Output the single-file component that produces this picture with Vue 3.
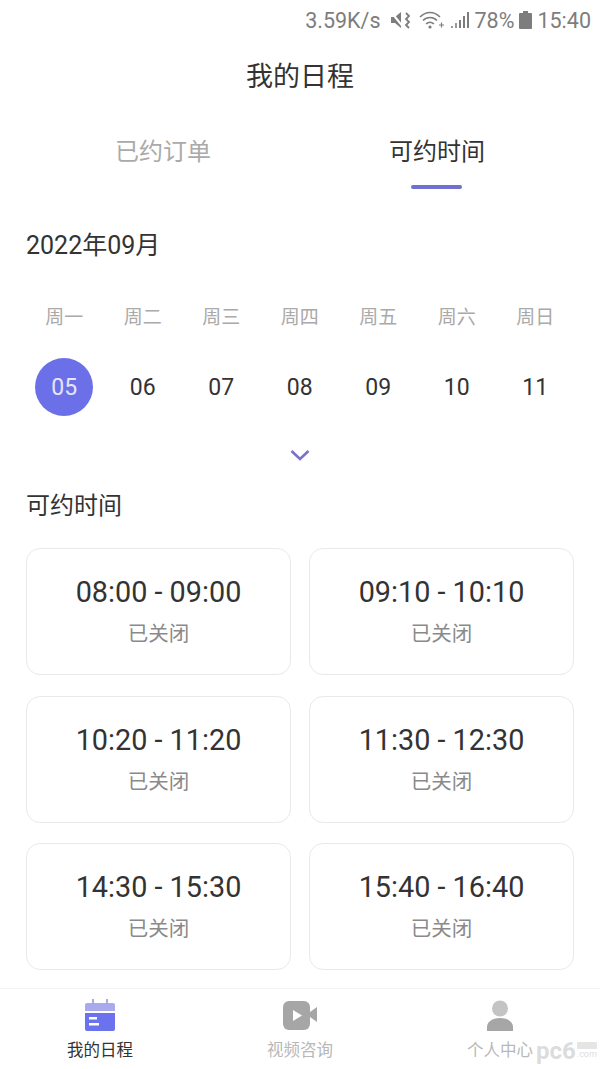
<script setup>
const weekdays = ['周一', '周二', '周三', '周四', '周五', '周六', '周日']
const days = ['05', '06', '07', '08', '09', '10', '11']
const slots = [
  '08:00 - 09:00',
  '09:10 - 10:10',
  '10:20 - 11:20',
  '11:30 - 12:30',
  '14:30 - 15:30',
  '15:40 - 16:40'
]
</script>

<template>
  <div class="page">
    <div class="status-bar">
      <span class="st-speed">3.59K/s</span>
      <svg class="st-mute" viewBox="0 0 24 20" width="24" height="20">
        <path d="M1 7h4l6-5v16l-6-5H1z" fill="#7d7d7d" />
        <path d="M1 2l13 16" stroke="#fff" stroke-width="2" />
        <path d="M16 3l3 3-3 3 3 3-3 3 3 3" fill="none" stroke="#7d7d7d" stroke-width="1.8" />
      </svg>
      <svg class="st-wifi" viewBox="0 0 26 20" width="26" height="20">
        <path d="M1 7c6-6 14-6 20 0M4 10.5c4-4 10-4 14 0M7 14c2.5-2.2 5.5-2.2 8 0" fill="none" stroke="#7d7d7d" stroke-width="1.6" />
        <circle cx="11" cy="17" r="1.6" fill="#7d7d7d" />
        <path d="M20 15h5M22.5 12.5v5" stroke="#7d7d7d" stroke-width="1.2" />
      </svg>
      <svg class="st-signal" viewBox="0 0 20 18" width="20" height="18">
        <rect x="1" y="15" width="2" height="2" fill="#9a9a9a" />
        <rect x="5" y="12" width="2" height="5" fill="#9a9a9a" />
        <rect x="9" y="9" width="2" height="8" fill="#7d7d7d" />
        <rect x="13" y="5" width="2" height="12" fill="#7d7d7d" />
        <rect x="17" y="1" width="2" height="16" fill="#7d7d7d" />
      </svg>
      <span class="st-level">78%</span>
      <svg class="st-batt" viewBox="0 0 13 20" width="13" height="20">
        <path d="M4 1h5v2h3a1 1 0 0 1 1 1v14a1 1 0 0 1-1 1H1a1 1 0 0 1-1-1V4a1 1 0 0 1 1-1h3z" fill="#7d7d7d" />
      </svg>
      <span>15:40</span>
    </div>

    <h1 class="title">我的日程</h1>

    <div class="tabs">
      <div class="tab">已约订单</div>
      <div class="tab active">可约时间</div>
    </div>

    <div class="month">2022年09月</div>

    <div class="week-row">
      <span v-for="w in weekdays" :key="w" class="week">{{ w }}</span>
    </div>
    <div class="day-row">
      <div class="day-cell" v-for="(d, i) in days" :key="d">
        <span class="day" :class="{ selected: i === 0 }">{{ d }}</span>
      </div>
    </div>

    <div class="expand">
      <svg width="22" height="14" viewBox="0 0 22 14">
        <path d="M2.5 3l8.5 8 8.5-8" fill="none" stroke="#7773c9" stroke-width="2.6" />
      </svg>
    </div>

    <div class="section">可约时间</div>

    <div class="slots">
      <div class="slot" v-for="s in slots" :key="s">
        <div class="slot-time">{{ s }}</div>
        <div class="slot-state">已关闭</div>
      </div>
    </div>

    <nav class="tabbar">
      <div class="nav-item on">
        <svg width="32" height="32" viewBox="0 0 32 32">
          <path d="M1 6a2 2 0 0 1 2-2h26a2 2 0 0 1 2 2v6H1z" fill="#a9a9ee" />
          <rect x="8" y="0" width="2" height="6" fill="#a9a9ee" />
          <rect x="22" y="0" width="2" height="6" fill="#a9a9ee" />
          <path d="M1 14h30v16a2 2 0 0 1-2 2H3a2 2 0 0 1-2-2z" fill="#6b72ee" />
          <rect x="5" y="18" width="8" height="2.5" fill="#fff" />
          <rect x="5" y="24" width="10" height="2.5" fill="#fff" />
        </svg>
        <span>我的日程</span>
      </div>
      <div class="nav-item">
        <svg width="36" height="32" viewBox="0 0 36 32">
          <rect x="1" y="2" width="27" height="29" rx="6" fill="#a6a6a6" />
          <path d="M28 13l7-5v15l-7-5z" fill="#a6a6a6" />
          <path d="M11 11l9 5.5-9 5.5z" fill="#fff" />
        </svg>
        <span>视频咨询</span>
      </div>
      <div class="nav-item">
        <svg width="32" height="32" viewBox="0 0 32 32">
          <circle cx="16" cy="9.5" r="8" fill="#c4c4c4" />
          <path d="M3 32v-4c0-5 5-9 13-9s13 4 13 9v4z" fill="#a6a6a6" />
        </svg>
        <span>个人中心</span>
      </div>
    </nav>

    <div class="watermark">
      <span class="wm-name">pc6</span>
      <span class="wm-side">
        <i class="wm-box"></i>
        <span class="wm-com">.com</span>
      </span>
    </div>
  </div>
</template>

<style>
html, body { margin: 0; background: #fff; }
</style>

<style scoped>
.page {
  position: relative;
  width: 600px;
  height: 1069px;
  overflow: hidden;
  background: #fff;
  color: #333;
  font-family: Roboto, "Noto Sans CJK SC", sans-serif;
}

.status-bar {
  height: 40px;
  padding-right: 9px;
  display: flex;
  align-items: center;
  justify-content: flex-end;
  gap: 5px;
  font-size: 21.5px;
  color: #7d7d7d;
}

.st-speed { margin-right: 4px; }

.title {
  margin: 0;
  height: 74px;
  line-height: 74px;
  text-align: center;
  font-size: 27px;
  font-weight: 400;
  color: #333;
}

.tabs {
  display: flex;
  padding: 0 26px;
}

.tab {
  flex: 1;
  position: relative;
  height: 75px;
  text-align: center;
  font-size: 24px;
  line-height: 77px;
  color: #aaa;
}

.tab.active { color: #333; }

.tab.active::after {
  content: '';
  position: absolute;
  left: 50%;
  bottom: 0;
  width: 51px;
  height: 4px;
  margin-left: -26px;
  border-radius: 2px;
  background: #6f70d0;
}

.month {
  margin: 41px 26px 0;
  font-size: 25px;
  line-height: 32px;
  color: #333;
}

.week-row, .day-row {
  display: grid;
  grid-template-columns: repeat(7, 78.5px);
  padding-left: 25px;
}

.week-row { margin-top: 42px; }

.week {
  text-align: center;
  font-size: 19px;
  line-height: 28px;
  color: #aaa;
}

.day-row { margin-top: 26px; }

.day-cell { display: flex; justify-content: center; }

.day {
  width: 58px;
  height: 58px;
  border-radius: 50%;
  display: flex;
  align-items: center;
  justify-content: center;
  font-size: 23px;
  color: #333;
}

.day.selected { background: #6b70e8; color: #e6e6f5; }

.expand {
  height: 14px;
  margin-top: 32px;
  display: flex;
  justify-content: center;
}

.section {
  margin: 26px 26px 0;
  font-size: 24px;
  line-height: 36px;
  color: #333;
}

.slots {
  margin: 24px 26px 0;
  display: grid;
  grid-template-columns: 265px 265px;
  column-gap: 18px;
  row-gap: 20.5px;
}

.slot {
  box-sizing: border-box;
  height: 127px;
  border: 1px solid #e9e9e9;
  border-radius: 14px;
  text-align: center;
  padding-top: 23px;
}

.slot-time {
  font-size: 28.8px;
  line-height: 40px;
  color: #333;
}

.slot-state {
  margin-top: 7px;
  font-size: 20.5px;
  line-height: 30px;
  color: #8a8a8a;
}

.tabbar {
  position: absolute;
  left: 0;
  right: 0;
  bottom: 0;
  height: 80px;
  border-top: 1px solid #f3f3f3;
  display: flex;
  background: #fff;
}

.nav-item {
  flex: 1;
  display: flex;
  flex-direction: column;
  align-items: center;
  padding-top: 10px;
  gap: 7px;
  font-size: 16.5px;
  line-height: 26px;
  color: #b8b8b8;
}

.nav-item.on { color: #333; }

.watermark {
  position: absolute;
  left: 536px;
  top: 1037px;
  display: flex;
  align-items: center;
  color: rgba(190, 190, 190, .55);
}

.wm-name {
  font-size: 24px;
  font-weight: 700;
  line-height: 28px;
}

.wm-side {
  display: flex;
  flex-direction: column;
  align-items: center;
  margin-left: 1px;
}

.wm-box {
  width: 20px;
  height: 7px;
  background: rgba(190, 190, 190, .4);
  border-radius: 1px;
}

.wm-com {
  font-size: 9px;
  line-height: 11px;
}
</style>
